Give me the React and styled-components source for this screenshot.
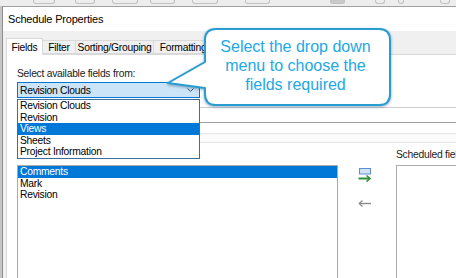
import styled, { createGlobalStyle } from 'styled-components';

const GlobalStyle = createGlobalStyle`
  body {
    margin: 0;
    background: #c6c6c6;
    font-family: "Liberation Sans", Arial, sans-serif;
  }
`;

const Page = styled.div`
  position: relative;
  width: 456px;
  height: 278px;
  overflow: hidden;
  background: #c6c6c6;
`;

const Ribbon = styled.div`
  display: flex;
  align-items: flex-start;
  height: 6px;
  background: #ededed;
`;

const RibbonIcon = styled.span`
  display: block;
  margin-left: ${(p) => p.$gap}px;
  width: ${(p) => p.$w}px;
  height: 4px;
  box-sizing: border-box;
  border: 1px solid #c2c2c2;
  border-top: none;
  border-radius: 0 0 3px 3px;
  background: ${(p) => (p.$filled ? '#c9c9c9' : 'transparent')};
`;

const Dialog = styled.div`
  margin-left: 2px;
  width: 470px;
  height: 272px;
  border-left: 1px solid #8e8e8e;
  border-top: 1px solid #a0a0a0;
  background: #f0f0f0;
`;

const TitleBar = styled.div`
  display: flex;
  align-items: center;
  height: 24px;
  padding-left: 5px;
  background: #fff;
  font-size: 11px;
  letter-spacing: -0.2px;
  color: #000;
`;

const Body = styled.div`
  padding: 7px 0 0 3px;
`;

const TabRow = styled.div`
  display: flex;
  align-items: flex-end;
  height: 16px;
`;

const Tab = styled.div`
  position: relative;
  z-index: ${(p) => (p.$active ? 1 : 0)};
  display: flex;
  align-items: center;
  justify-content: center;
  box-sizing: border-box;
  width: ${(p) => p.$w}px;
  height: ${(p) => (p.$active ? 17 : 14)}px;
  margin-bottom: ${(p) => (p.$active ? -1 : 0)}px;
  margin-left: ${(p) => (p.$first ? 0 : -1)}px;
  border: 1px solid #d9d9d9;
  border-bottom: ${(p) => (p.$active ? 'none' : '1px solid #d9d9d9')};
  background: ${(p) => (p.$active ? '#fff' : '#f0f0f0')};
  font-size: 10.3px;
  letter-spacing: -0.25px;
  color: #000;
  white-space: nowrap;
`;

const Panel = styled.div`
  height: 230px;
  padding: 13px 0 0 10px;
  border: 1px solid #d9d9d9;
  border-right: none;
  background: #fff;
`;

const Label = styled.div`
  font-size: 10.3px;
  letter-spacing: -0.25px;
  line-height: 12px;
  color: #1a1a1a;
  white-space: nowrap;
`;

const LabelRow = styled.div`
  display: flex;
  justify-content: space-between;
  width: 183px;
  font-size: 10.3px;
  letter-spacing: -0.25px;
  line-height: 12px;
  color: #1a1a1a;
`;

const ComboWrap = styled.div`
  position: relative;
  width: 183px;
  margin-top: 2px;
`;

const Combo = styled.div`
  display: flex;
  align-items: center;
  justify-content: space-between;
  box-sizing: border-box;
  height: 16px;
  padding: 0 5px 0 2px;
  border: 1px solid #0078d7;
  background: #cce4f7;
  font-size: 10.3px;
  letter-spacing: -0.25px;
  color: #000;
`;

const Dropdown = styled.div`
  position: absolute;
  z-index: 2;
  top: calc(100% + 1px);
  left: 0;
  width: 183px;
  box-sizing: border-box;
  border: 1px solid #3d6e9c;
  background: #fff;
`;

const Row = styled.div`
  height: 11.5px;
  line-height: 11.5px;
  padding-left: 2px;
  font-size: 10.3px;
  letter-spacing: -0.25px;
  white-space: nowrap;
  color: ${(p) => (p.$selected ? '#fff' : '#000')};
  background: ${(p) => (p.$selected ? '#0078d7' : 'transparent')};
`;

const FilterBox = styled.div`
  box-sizing: border-box;
  height: 16px;
  margin-top: 9px;
  border-top: 1px solid #cdcdcd;
  border-bottom: 1px solid #a0a0a0;
  background: #fff;
`;

const Band = styled.div`
  box-sizing: border-box;
  height: 10px;
  margin-top: 10px;
  border-top: 1px solid #e4e4e4;
  border-bottom: 1px solid #e4e4e4;
  background: #fbfbfb;
`;

const Columns = styled.div`
  display: grid;
  grid-template-columns: 321px 58px 1fr;
  grid-template-rows: 12px auto;
  row-gap: 4px;
  margin-top: 6px;
`;

const ListBox = styled.div`
  box-sizing: border-box;
  height: 120px;
  border: 1px solid #ababab;
  background: #fff;
`;

const IconColumn = styled.div`
  display: flex;
  flex-direction: column;
  gap: 18px;
  padding: 3px 0 0 20px;
`;

const Callout = styled.svg`
  position: absolute;
  left: 166px;
  top: 26px;
  width: 228px;
  height: 84px;
  overflow: visible;
  filter: drop-shadow(0 1px 1.5px rgba(0, 70, 120, 0.45));
`;

const CalloutText = styled.div`
  position: absolute;
  left: 205px;
  top: 29px;
  width: 181px;
  padding-top: 8px;
  font-size: 16px;
  line-height: 19px;
  text-align: center;
  color: #22a8e6;
`;

const ribbon = [
  { gap: 33, w: 22 },
  { gap: 20, w: 20 },
  { gap: 17, w: 26 },
  { gap: 12, w: 25 },
  { gap: 17, w: 26 },
  { gap: 27, w: 25 },
  { gap: 60, w: 15, filled: true },
  { gap: 30, w: 10 },
  { gap: 13, w: 6 },
  { gap: 36, w: 10 },
];

const tabs = [
  { label: 'Fields', w: 37, active: true },
  { label: 'Filter', w: 34 },
  { label: 'Sorting/Grouping', w: 79 },
  { label: 'Formatting', w: 60 },
];

const sources = ['Revision Clouds', 'Revision', 'Views', 'Sheets', 'Project Information'];
const available = ['Comments', 'Mark', 'Revision'];

function Chevron() {
  return (
    <svg width="7" height="4" viewBox="0 0 7 4">
      <polyline points="0.5,0.5 3.5,3.5 6.5,0.5" fill="none" stroke="#505050" strokeWidth="1" />
    </svg>
  );
}

function AddIcon() {
  return (
    <svg width="14" height="14" viewBox="0 0 14 14">
      <rect x="1.5" y="0.5" width="11" height="5.5" fill="#cfe3f7" stroke="#5b8fd0" />
      <line x1="0.5" y1="10.5" x2="11.5" y2="10.5" stroke="#2f8f3a" strokeWidth="2" />
      <polyline points="8.5,7.5 12,10.5 8.5,13.5" fill="none" stroke="#2f8f3a" strokeWidth="1.6" />
    </svg>
  );
}

function RemoveIcon() {
  return (
    <svg width="14" height="7" viewBox="0 0 14 7">
      <line x1="1.5" y1="3.5" x2="13" y2="3.5" stroke="#8a8a8a" strokeWidth="1.4" />
      <polyline points="4.5,0.5 1.2,3.5 4.5,6.5" fill="none" stroke="#8a8a8a" strokeWidth="1.2" />
    </svg>
  );
}

export default function App() {
  return (
    <>
      <GlobalStyle />
      <Page>
        <Ribbon>
          {ribbon.map((r, i) => (
            <RibbonIcon key={i} $gap={r.gap} $w={r.w} $filled={r.filled} />
          ))}
        </Ribbon>
        <Dialog>
          <TitleBar>Schedule Properties</TitleBar>
          <Body>
            <TabRow>
              {tabs.map((t, i) => (
                <Tab key={t.label} $w={t.w} $active={t.active} $first={i === 0}>
                  {t.label}
                </Tab>
              ))}
            </TabRow>
            <Panel>
              <Label>Select available fields from:</Label>
              <ComboWrap>
                <Combo>
                  <span>Revision Clouds</span>
                  <Chevron />
                </Combo>
                <Dropdown>
                  {sources.map((s) => (
                    <Row key={s} $selected={s === 'Views'}>{s}</Row>
                  ))}
                </Dropdown>
              </ComboWrap>
              <FilterBox />
              <Band />
              <Columns>
                <LabelRow>
                  <span>Available fields:</span>
                  <span>3 items</span>
                </LabelRow>
                <span />
                <Label>Scheduled fields (in order):</Label>
                <ListBox>
                  {available.map((a, i) => (
                    <Row key={a} $selected={i === 0}>{a}</Row>
                  ))}
                </ListBox>
                <IconColumn>
                  <AddIcon />
                  <RemoveIcon />
                </IconColumn>
                <ListBox />
              </Columns>
            </Panel>
          </Body>
        </Dialog>
        <Callout viewBox="0 0 228 84">
          <path
            d="M50 3 H213 Q224 3 224 14 V68 Q224 79 213 79 H50 Q39 79 39 68 V62 L2 57 L39 36 V14 Q39 3 50 3 Z"
            fill="#fff"
            stroke="#2a9cd0"
            strokeWidth="2"
            strokeLinejoin="round"
          />
        </Callout>
        <CalloutText>
          Select the drop down
          <br />
          menu to choose the
          <br />
          fields required
        </CalloutText>
      </Page>
    </>
  );
}
